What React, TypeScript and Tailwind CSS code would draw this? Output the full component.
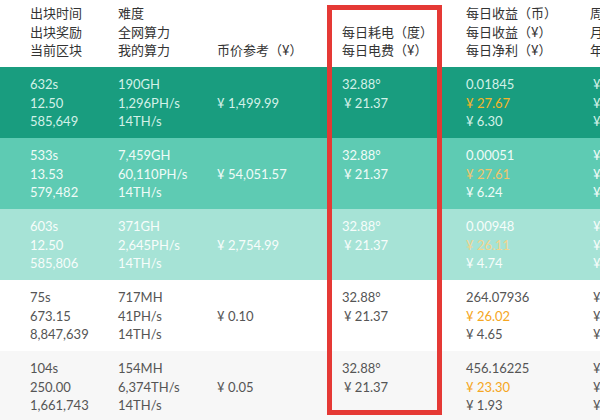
import React from "react";

const FONT = "font-['Lato','Noto_Sans_CJK_SC',sans-serif]";

type Row = {
  bg: string;
  text: string;
  orange: string;
  a: [string, string, string];
  b: [string, string, string];
  price: string;
  coin: string;
  income: string;
  net: string;
  side: [string, string, string];
};

const rows: Row[] = [
  {
    bg: "bg-[#199d7f]",
    text: "text-[#d3f1e8]",
    orange: "text-[#f6b52a]",
    a: ["632s", "12.50", "585,649"],
    b: ["190GH", "1,296PH/s", "14TH/s"],
    price: "1,499.99",
    coin: "0.01845",
    income: "27.67",
    net: "6.30",
    side: ["¥ 44.10", "¥ 189.00", "¥ 2,299.50"],
  },
  {
    bg: "bg-[#5ecbb3]",
    text: "text-[#f0fbf8]",
    orange: "text-[#f2c56c]",
    a: ["533s", "13.53", "579,482"],
    b: ["7,459GH", "60,110PH/s", "14TH/s"],
    price: "54,051.57",
    coin: "0.00051",
    income: "27.61",
    net: "6.24",
    side: ["¥ 43.68", "¥ 187.20", "¥ 2,277.60"],
  },
  {
    bg: "bg-[#a6e3d6]",
    text: "text-[#f7fdfb]",
    orange: "text-[#f1d58f]",
    a: ["603s", "12.50", "585,806"],
    b: ["371GH", "2,645PH/s", "14TH/s"],
    price: "2,754.99",
    coin: "0.00948",
    income: "26.11",
    net: "4.74",
    side: ["¥ 33.18", "¥ 142.20", "¥ 1,730.10"],
  },
  {
    bg: "bg-white",
    text: "text-[#555555]",
    orange: "text-[#f5a623]",
    a: ["75s", "673.15", "8,847,639"],
    b: ["717MH", "41PH/s", "14TH/s"],
    price: "0.10",
    coin: "264.07936",
    income: "26.02",
    net: "4.65",
    side: ["¥ 32.55", "¥ 139.50", "¥ 1,697.25"],
  },
  {
    bg: "bg-[#f7f7f7]",
    text: "text-[#555555]",
    orange: "text-[#f5a623]",
    a: ["104s", "250.00", "1,661,743"],
    b: ["154MH", "6,374TH/s", "14TH/s"],
    price: "0.05",
    coin: "456.16225",
    income: "23.30",
    net: "1.93",
    side: ["¥ 13.51", "¥ 57.90", "¥ 704.45"],
  },
];

const GRID = "grid grid-cols-[118px_99px_124px_125px_124px_1fr]";

function Lines({ items }: { items: React.ReactNode[] }) {
  return (
    <div className="flex flex-col">
      {items.map((t, i) => (
        <div key={i} className="h-[18.5px] leading-[18.5px] whitespace-nowrap">
          {t}
        </div>
      ))}
    </div>
  );
}

export default function App() {
  return (
    <div className={`relative w-[600px] h-[420px] overflow-hidden bg-white text-[13px] ${FONT}`}>
      {/* header */}
      <div className={`${GRID} h-[67px] pt-[4px] text-[#333333] text-[13px]`}>
        <div className="pl-[30px]">
          <Lines items={["出块时间", "出块奖励", "当前区块"]} />
        </div>
        <Lines items={["难度", "全网算力", "我的算力"]} />
        <div className="pt-[37px] whitespace-nowrap leading-[18.5px]">币价参考（¥）</div>
        <div className="pt-[18.5px] pl-[1px]">
          <Lines items={["每日耗电（度）", "每日电费（¥）"]} />
        </div>
        <Lines items={["每日收益（币）", "每日收益（¥）", "每日净利（¥）"]} />
        <Lines items={["周净利（¥）", "月净利（¥）", "年净利（¥）"]} />
      </div>

      {/* rows */}
      {rows.map((r, i) => (
        <div key={i} className={`${GRID} h-[71px] pt-[8px] ${r.bg} ${r.text}`}>
          <div className="pl-[30px]">
            <Lines items={r.a} />
          </div>
          <Lines items={r.b} />
          <div className="pt-[18.5px] leading-[18.5px] whitespace-nowrap">¥ {r.price}</div>
          <div className="pl-[1px]">
            <Lines items={["32.88°", <span className="pl-[2px]">¥ 21.37</span>]} />
          </div>
          <Lines
            items={[
              r.coin,
              <span className={r.orange}>¥ {r.income}</span>,
              `¥ ${r.net}`,
            ]}
          />
          <div className="pl-[3px]">
            <Lines items={r.side} />
          </div>
        </div>
      ))}

      {/* highlight box */}
      <div className="absolute left-[327px] top-[5px] w-[115px] h-[410px] border-[5px] border-[#e53935] pointer-events-none" />
    </div>
  );
}
